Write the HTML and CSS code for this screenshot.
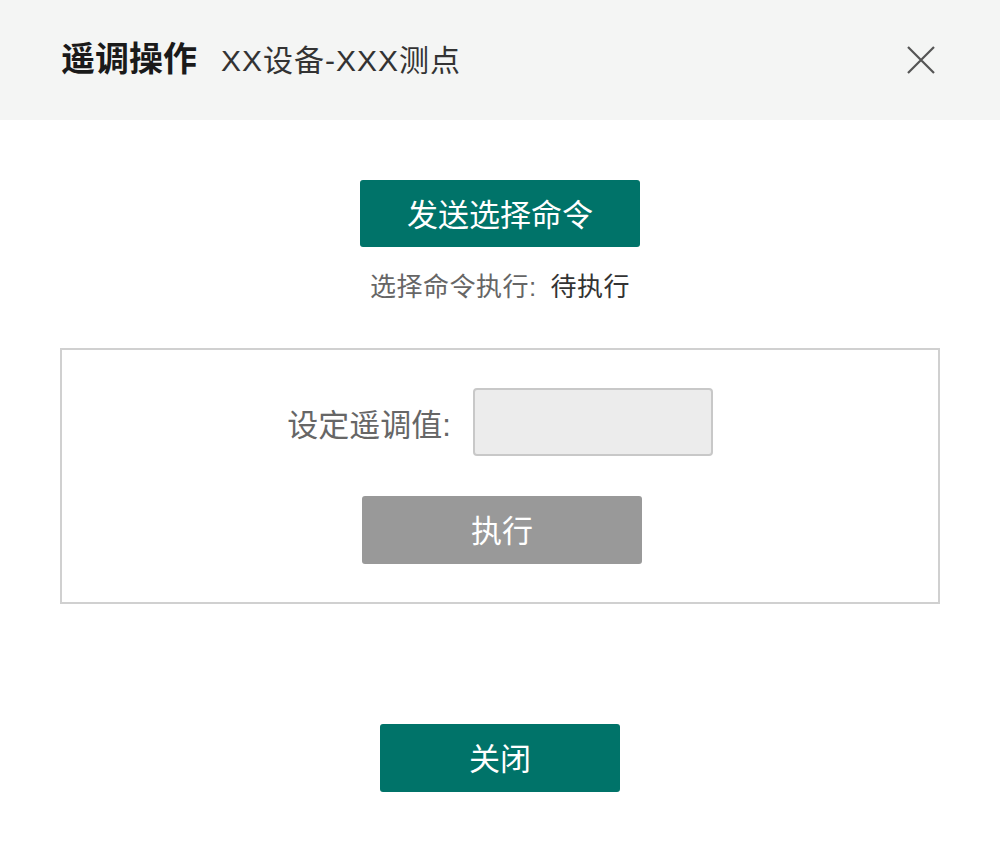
FILE: index.html
```html
<!DOCTYPE html>
<html lang="zh-CN">
<head>
<meta charset="utf-8">
<title>遥调操作</title>
<link rel="stylesheet" href="styles.css">
</head>
<body>
<div class="dialog">
  <div class="header">
    <div class="title-group">
      <span class="title">遥调操作</span>
      <span class="subtitle">XX设备-XXX测点</span>
    </div>
    <button class="close-icon" aria-label="关闭">
      <svg width="28" height="28" viewBox="0 0 28 28"><path d="M1 1 L27 27 M27 1 L1 27" stroke="#555" stroke-width="2.2" fill="none"/></svg>
    </button>
  </div>
  <div class="content">
    <button class="btn btn-primary btn-select">发送选择命令</button>
    <div class="status"><span class="status-label">选择命令执行:</span><span class="status-value">待执行</span></div>
    <div class="panel">
      <div class="field">
        <label class="field-label">设定遥调值:</label>
        <input class="field-input" type="text">
      </div>
      <button class="btn btn-disabled">执行</button>
    </div>
  </div>
  <div class="footer">
    <button class="btn btn-primary btn-close">关闭</button>
  </div>
</div>
</body>
</html>
```
FILE: styles.css
```css
* { box-sizing: border-box; }
html, body { margin: 0; padding: 0; }
body {
  background: #fff;
  font-family: "Liberation Sans", "Noto Sans CJK SC", sans-serif;
  width: 1000px;
  height: 852px;
}
.dialog { width: 1000px; }
.header {
  height: 120px;
  background: #f4f5f4;
  display: flex;
  align-items: center;
  justify-content: space-between;
  padding: 0 65px 0 61px;
}
.title-group { display: flex; align-items: baseline; gap: 24px; margin-bottom: 8px; }
.title { font-size: 34px; font-weight: 700; color: #1a1a1a; }
.subtitle { font-size: 30px; color: #333; letter-spacing: 1px; }
.close-icon {
  background: none; border: none; padding: 0; margin: 0;
  width: 28px; height: 28px; display: block; cursor: pointer;
}
.close-icon svg { display: block; }
.content {
  padding-top: 60px;
  display: flex;
  flex-direction: column;
  align-items: center;
}
.btn {
  border: none;
  border-radius: 3px;
  color: #fff;
  font-family: inherit;
  font-size: 31px;
  height: 68px;
  padding: 0 0 3px;
  cursor: pointer;
}
.btn-primary { background: #007369; }
.btn-select { width: 280px; height: 67px; }
.status {
  margin-top: 22px;
  font-size: 26px;
  line-height: 36px;
  height: 36px;
  letter-spacing: 0.5px;
}
.status-label { color: #666; }
.status-value { color: #333; margin-left: 14px; }
.panel {
  margin-top: 43px;
  width: 880px;
  border: 2px solid #d0d0d0;
  padding: 38px 0 38px;
  display: flex;
  flex-direction: column;
  align-items: center;
  gap: 40px;
}
.field { display: flex; align-items: center; gap: 22px; margin-left: 0; }
.field-label { font-size: 31px; color: #666; }
.field-input {
  width: 240px; height: 68px;
  background: #ececec;
  border: 2px solid #c8c8c8;
  border-radius: 4px;
  font-size: 28px;
  padding: 0 12px;
  outline: none;
}
.btn-disabled { background: #999; width: 280px; margin-left: 4px; }
.footer {
  margin-top: 120px;
  display: flex;
  justify-content: center;
}
.btn-close { width: 240px; }
```
